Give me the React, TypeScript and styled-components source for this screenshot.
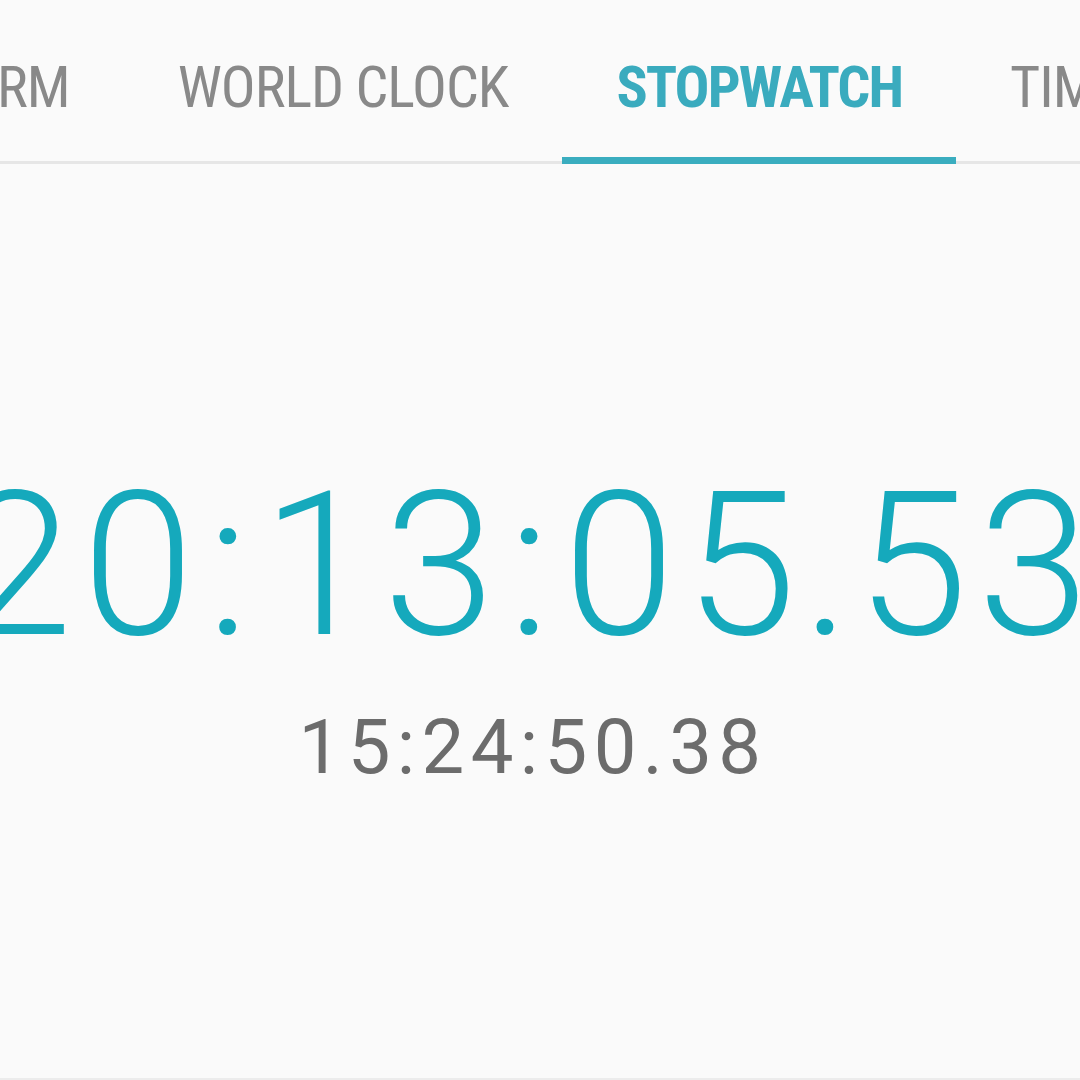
import styled, { createGlobalStyle } from 'styled-components';

const GlobalStyle = createGlobalStyle`
  html, body {
    margin: 0;
    padding: 0;
    background: #fafafa;
  }
  body {
    font-family: Roboto, 'Liberation Sans', sans-serif;
  }
`

const Screen = styled.div`
  width: 1080px;
  height: 1080px;
  overflow: hidden;
  background: #fafafa;
  display: flex;
  flex-direction: column;
  border-bottom: 2px solid #ececec;
  box-sizing: border-box;
`

const TabBar = styled.div`
  height: 164px;
  border-bottom: 3px solid #e6e6e6;
  box-sizing: border-box;
  flex-shrink: 0;
`

// strip is scrolled so that ALARM sits mostly off screen
const TabStrip = styled.div`
  display: flex;
  height: 100%;
  margin-left: -149px;
  white-space: nowrap;
`

const Tab = styled.div<{ $active?: boolean }>`
  position: relative;
  padding: 58px 54px 0;
  height: 100%;
  display: flex;
  align-items: flex-start;
  box-sizing: border-box;
  font-size: 58px;
  line-height: 58px;
  font-stretch: 80%;
  font-weight: ${p => (p.$active ? 700 : 400)};
  letter-spacing: ${p => (p.$active ? '-1.9px' : '-1px')};
  color: ${p => (p.$active ? '#3aabbe' : '#898989')};
  &::after {
    content: '';
    display: ${p => (p.$active ? 'block' : 'none')};
    position: absolute;
    left: 0;
    right: 0;
    bottom: -3px;
    height: 7px;
    background: #3aadbf;
  }
`

const Body = styled.div`
  flex: 1;
  display: flex;
  flex-direction: column;
  align-items: center;
  padding-top: 301px;
`

const MainTime = styled.div`
  width: 100%;
  display: flex;
  justify-content: center;
  white-space: nowrap;
  font-size: 201px;
  line-height: 201px;
  font-weight: 300;
  letter-spacing: 10px;
  color: #15a9bc;
  margin-left: -20px;
`

const Sep = styled.span<{ $kind: 'colon' | 'dot' }>`
  margin: ${p => (p.$kind === 'colon' ? '0 3px' : '0 -4px')};
`

const LapTime = styled.div`
  margin-top: 43px;
  font-size: 76px;
  line-height: 76px;
  font-weight: 400;
  letter-spacing: 6.4px;
  color: #6c6c6c;
  margin-left: -14px;
`

const tabs = ['ALARM', 'WORLD CLOCK', 'STOPWATCH', 'TIMER']

function renderTime(value: string) {
  return value.split(/([:.])/).map((part, i) =>
    part === ':' || part === '.' ? (
      <Sep key={i} $kind={part === ':' ? 'colon' : 'dot'}>{part}</Sep>
    ) : (
      <span key={i}>{part}</span>
    )
  )
}

export default function App() {
  return (
    <>
      <GlobalStyle />
      <Screen>
        <TabBar>
          <TabStrip>
            {tabs.map(t => (
              <Tab key={t} $active={t === 'STOPWATCH'}>{t}</Tab>
            ))}
          </TabStrip>
        </TabBar>
        <Body>
          <MainTime>{renderTime('20:13:05.53')}</MainTime>
          <LapTime>15:24:50.38</LapTime>
        </Body>
      </Screen>
    </>
  );
}
